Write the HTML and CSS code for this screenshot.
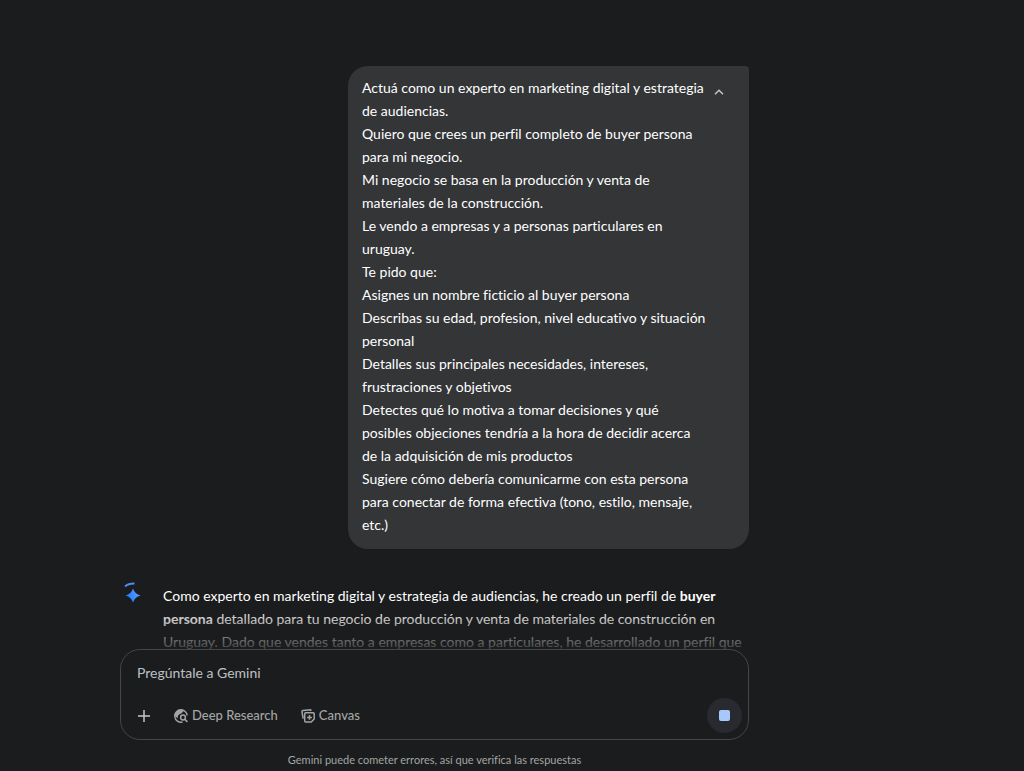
FILE: index.html
```html
<!DOCTYPE html>
<html lang="es">
<head>
<meta charset="utf-8">
<meta name="viewport" content="width=device-width, initial-scale=1">
<title>Gemini</title>
<link rel="stylesheet" href="styles.css">
</head>
<body>
<div class="page">
  <main class="chat">
    <section class="prompt">
      <div class="prompt-text">
        <p>Actuá como un experto en marketing digital y estrategia<br>de audiencias.</p>
        <p>Quiero que crees un perfil completo de buyer persona<br>para mi negocio.</p>
        <p>Mi negocio se basa en la producción y venta de<br>materiales de la construcción.</p>
        <p>Le vendo a empresas y a personas particulares en<br>uruguay.</p>
        <p>Te pido que:</p>
        <p>Asignes un nombre ficticio al buyer persona</p>
        <p>Describas su edad, profesion, nivel educativo y situación<br>personal</p>
        <p>Detalles sus principales necesidades, intereses,<br>frustraciones y objetivos</p>
        <p>Detectes qué lo motiva a tomar decisiones y qué<br>posibles objeciones tendría a la hora de decidir acerca<br>de la adquisición de mis productos</p>
        <p>Sugiere cómo debería comunicarme con esta persona<br>para conectar de forma efectiva (tono, estilo, mensaje,<br>etc.)</p>
      </div>
      <button class="collapse" type="button" aria-label="Contraer">
        <svg width="10" height="6" viewBox="0 0 10 6" fill="none" stroke="#c4c7c5" stroke-width="1.5"><path d="M1 5.2 5 1.2 9 5.2"/></svg>
      </button>
    </section>
    <section class="answer">
      <svg class="spark" width="20" height="22" viewBox="0 0 20 22" aria-hidden="true">
        <defs><linearGradient id="spark-fill" x1="0" y1="0.6" x2="1" y2="0.3"><stop offset="0" stop-color="#1b7cf5"/><stop offset="0.5" stop-color="#3d8bfd"/><stop offset="1" stop-color="#6d9bf5"/></linearGradient></defs>
        <path d="M1 4.500Q4.500 1.300 10.500 1.500" fill="none" stroke="#4a8cf0" stroke-width="1.800"/>
        <path d="M9 6.500Q10.800 12 16.500 13.500Q10.800 15 9 20.500Q7.200 15 1.500 13.500Q7.200 12 9 6.500Z" fill="url(#spark-fill)"/>
      </svg>
      <p class="answer-text">Como experto en marketing digital y estrategia de audiencias, he creado un perfil de <strong>buyer</strong><br><strong>persona</strong> detallado para tu negocio de producción y venta de materiales de construcción en<br>Uruguay. Dado que vendes tanto a empresas como a particulares, he desarrollado un perfil que</p>
    </section>
  </main>
  <form class="composer">
    <input class="ask" type="text" placeholder="Pregúntale a Gemini" aria-label="Pregúntale a Gemini">
    <div class="tools">
      <button class="tool add" type="button" aria-label="Agregar">
        <svg width="14" height="14" viewBox="0 0 14 14" fill="none" stroke="#c4c7c5" stroke-width="1.500"><path d="M7 1V13M1 7H13"/></svg>
      </button>
      <button class="tool research" type="button">
        <svg width="14" height="14" viewBox="0 0 14 14" fill="none"><path d="M7 .8A6.200 6.200 0 1 0 8.500 13M7 .8A6.200 6.200 0 0 1 13.200 6.500" stroke="#a2a5a4" stroke-width="1.400"/><path d="M7 .6C3.500.5.700 3.300.700 6.800L3.800 9.600V7.800C3.800 6.600 4.500 6.300 5.200 5.600 6 4.600 7.600 5 8.300 3.600 8.800 3 9.500 2.800 9.800 1.600Z" fill="#a2a5a4"/><circle cx="9" cy="8.500" r="2.400" stroke="#a2a5a4" stroke-width="1.500"/><path d="M10.800 10.300 13.400 12.900" stroke="#a2a5a4" stroke-width="1.600"/></svg>
        <span>Deep Research</span>
      </button>
      <button class="tool canvas" type="button">
        <svg width="14" height="14" viewBox="0 0 14 14" fill="none" stroke="#a2a5a4" stroke-width="1.500"><path d="M2.200 9.700 1 3Q.8 1.800 2 1.600L9.500.8 10.300 1.800"/><path d="M3.700 4.700Q3.700 3.700 4.700 3.700H12.200Q13.200 3.700 13.200 4.700V10L10.200 13H4.700Q3.700 13 3.700 12ZM8.500 6V10.800M6.100 8.400H10.900"/></svg>
        <span>Canvas</span>
      </button>
      <button class="stop" type="submit" aria-label="Detener respuesta"><span class="stop-mark"></span></button>
    </div>
  </form>
  <footer class="notice">Gemini puede cometer errores, así que verifica las respuestas</footer>
</div>
</body>
</html>
```
FILE: styles.css
```css
* {
  box-sizing: border-box;
}

body {
  margin: 0;
  background: #1b1c1d;
  color: #fff;
  font-family: Lato, "Liberation Sans", sans-serif;
  font-size: 14px;
  font-variant-ligatures: none;
  line-height: 23px;
}

p {
  margin: 0;
}

button,
input {
  margin: 0;
  padding: 0;
  border: 0;
  background: none;
  color: inherit;
  font: inherit;
}

.page {
  display: flex;
  flex-direction: column;
  height: 100vh;
  max-width: 749px;
  padding-left: 120px;
}

.chat {
  position: relative;
  flex: 1;
  min-height: 0;
  overflow: hidden;
  display: flex;
  flex-direction: column;
  gap: 35px;
  padding-top: 66px;
}

.chat::after {
  content: "";
  position: absolute;
  inset: auto 0 0;
  height: 42px;
  background: linear-gradient(transparent, #1b1c1dd0);
}

.prompt {
  flex: none;
  align-self: flex-end;
  display: flex;
  justify-content: space-between;
  align-items: flex-start;
  width: 401px;
  max-width: 100%;
  padding: 10px 25px 13px 14px;
  border-radius: 20px 4px 20px 20px;
  background: #333537;
}

.collapse {
  display: grid;
  place-items: center;
  width: 10px;
  height: 32px;
}

.answer {
  flex: none;
  display: flex;
  gap: 19px;
}

.spark {
  flex: none;
  margin-left: 4px;
  margin-top: -2px;
  overflow: visible;
}

.answer-text {
  white-space: nowrap;
}

.composer {
  flex: none;
  display: flex;
  flex-direction: column;
  justify-content: space-between;
  height: 91px;
  padding: 11px 6px 6px 16px;
  border: 1px solid #444647;
  border-radius: 20px;
}

.ask {
  width: 100%;
  height: 23px;
  outline: 0;
}

.ask::placeholder {
  color: #bdc1c6;
  opacity: 1;
}

.tools {
  display: flex;
  align-items: center;
  gap: 23px;
  color: #a2a5a4;
  font-size: 13px;
  font-weight: 500;
}

.tool {
  display: flex;
  align-items: center;
  gap: 4px;
}

.stop {
  display: grid;
  place-items: center;
  width: 35px;
  height: 35px;
  margin-left: auto;
  border-radius: 50%;
  background: #282a2f;
}

.stop-mark {
  width: 11px;
  height: 11px;
  border-radius: 2px;
  background: #a8c7fa;
}

.notice {
  flex: none;
  height: 31px;
  padding-top: 8px;
  color: #a2a5a4;
  font-size: 11px;
  text-align: center;
}
```
